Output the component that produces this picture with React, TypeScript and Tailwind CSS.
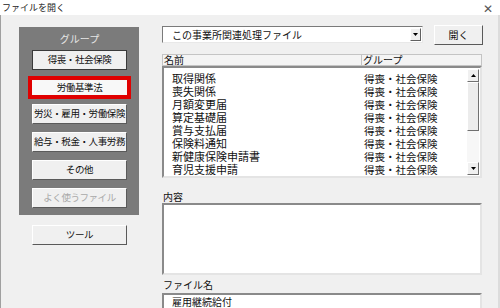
import React from "react";

const font = { fontFamily: '"Noto Sans CJK JP", "Noto Sans", sans-serif' };

function Btn({ label, disabled, focused }: { label: string; disabled?: boolean; focused?: boolean }) {
  return (
    <div
      className={
        "w-[95px] h-[20px] flex items-center justify-center bg-[#f0f0f0] text-[9.5px] leading-none whitespace-nowrap tracking-[-0.4px] border " +
        (focused
          ? "border-[#3a3a3a]"
          : "border-t-[#ffffff] border-l-[#ffffff] border-r-[#5a5a5a] border-b-[#5a5a5a]") +
        (disabled ? " text-[#a8a8a8]" : " text-[#111]")
      }
    >
      {label}
    </div>
  );
}

const rows = [
  "取得関係",
  "喪失関係",
  "月額変更届",
  "算定基礎届",
  "賞与支払届",
  "保険料通知",
  "新健康保険申請書",
  "育児支援申請",
];

export default function App() {
  return (
    <div className="w-[500px] h-[308px] bg-[#f0f0f0] overflow-hidden flex flex-col" style={font}>
      {/* title bar */}
      <div className="h-[15px] bg-white flex items-center justify-between pl-[2px] pr-[7px] shrink-0">
        <span className="text-[9px] leading-none text-[#222]">ファイルを開く</span>
        <span className="text-[12px] leading-none text-[#555]">✕</span>
      </div>
      {/* body */}
      <div className="flex-1 flex border-l border-l-[#a0a0a0] border-r-2 border-r-[#dcdcdc]">
        {/* left column */}
        <div className="ml-[18px] mt-[12px] flex flex-col">
          <div className="w-[120px] h-[188px] bg-[#7b7b7b] flex flex-col pl-[9px]">
            <div className="h-[23px] w-[103px] flex items-center justify-center text-[10px] text-[#e6e6e6] leading-none">
              グループ
            </div>
            <div className="ml-[4px]">
              <Btn label="得喪・社会保険" focused />
            </div>
            <div className="mt-[6px] w-[103px] h-[23px] border-[4px] border-[#e00000] bg-[#f8f8f8] flex items-center justify-center text-[9.5px] tracking-[-0.4px] whitespace-nowrap leading-none text-[#111]">
              労働基準法
            </div>
            <div className="ml-[4px] mt-[5px]">
              <Btn label="労災・雇用・労働保険" />
            </div>
            <div className="ml-[4px] mt-[8px]">
              <Btn label="給与・税金・人事労務" />
            </div>
            <div className="ml-[4px] mt-[8px]">
              <Btn label="その他" />
            </div>
            <div className="ml-[4px] mt-[8px]">
              <Btn label="よく使うファイル" disabled />
            </div>
          </div>
          <div className="ml-[13px] mt-[10px]">
            <Btn label="ツール" />
          </div>
        </div>
        {/* right column */}
        <div className="ml-[23px] w-[321px] flex flex-col">
          <div className="mt-[10px] flex items-start">
            <div className="mt-[1px] w-[261px] h-[17px] bg-white border border-t-[#7a7a7a] border-l-[#7a7a7a] border-r-[#e8e8e8] border-b-[#e8e8e8] flex items-center">
              <span className="flex-1 pl-[9px] text-[10px] leading-none text-[#111] whitespace-nowrap">この事業所関連処理ファイル</span>
              <div className="w-[11px] h-[13px] mr-[1px] bg-[#f0f0f0] border border-t-white border-l-white border-r-[#606060] border-b-[#606060] flex items-center justify-center">
                <svg width="5" height="3" viewBox="0 0 5 3">
                  <path d="M0 0 H5 L2.5 3 Z" fill="#000" />
                </svg>
              </div>
            </div>
            <div className="ml-[11px] w-[49px] h-[20px] bg-[#f0f0f0] border border-t-white border-l-white border-r-[#5a5a5a] border-b-[#5a5a5a] flex items-center justify-center text-[10px] leading-none text-[#111]">
              開く
            </div>
          </div>
          {/* header */}
          <div className="mt-[9px] w-[320px] h-[12px] bg-[#f4f4f4] border border-[#c4c4c4] flex text-[10px] leading-none text-[#111]">
            <div className="w-[199px] border-r border-r-[#c4c4c4] flex items-center pl-[1px]">名前</div>
            <div className="flex-1 flex items-center pl-[1px]">グループ</div>
          </div>
          {/* list */}
          <div className="w-[320px] h-[112px] bg-white border-2 border-t-[#8a8a8a] border-l-[#8a8a8a] border-r-[#e4e4e4] border-b-[#e4e4e4] flex">
            <div className="flex-1 pt-[4px] flex flex-col">
              {rows.map((r) => (
                <div key={r} className="h-[13px] flex items-center text-[#111]">
                  <span className="w-[200px] pl-[8px] text-[11px] leading-[13px] whitespace-nowrap">{r}</span>
                  <span className="text-[10.5px] leading-[13px] whitespace-nowrap">得喪・社会保険</span>
                </div>
              ))}
            </div>
            <div className="w-[12px] mr-[1px] mt-[1px] mb-[1px] flex flex-col bg-[#f7f7f7]">
              <div className="h-[13px] bg-[#f0f0f0] border border-t-white border-l-white border-r-[#707070] border-b-[#707070] flex items-center justify-center">
                <svg width="5" height="3" viewBox="0 0 5 3">
                  <path d="M0 3 H5 L2.5 0 Z" fill="#000" />
                </svg>
              </div>
              <div className="h-[49px] bg-[#ececec] border border-t-white border-l-white border-r-[#707070] border-b-[#707070]" />
              <div className="flex-1" />
              <div className="h-[13px] bg-[#f0f0f0] border border-t-white border-l-white border-r-[#707070] border-b-[#707070] flex items-center justify-center">
                <svg width="5" height="3" viewBox="0 0 5 3">
                  <path d="M0 0 H5 L2.5 3 Z" fill="#000" />
                </svg>
              </div>
            </div>
          </div>
          <div className="mt-[12px] h-[13px] flex items-center pl-[1px] text-[10px] leading-none text-[#111]">内容</div>
          <div className="w-[320px] h-[72px] bg-white border-2 border-t-[#8a8a8a] border-l-[#8a8a8a] border-r-[#e4e4e4] border-b-[#e4e4e4]" />
          <div className="mt-[3px] h-[13px] flex items-center pl-[1px] text-[10px] leading-none text-[#111]">ファイル名</div>
          <div className="mt-[2px] w-[320px] h-[16px] bg-white border-2 border-b-0 border-t-[#8a8a8a] border-l-[#8a8a8a] border-r-[#e4e4e4] flex items-center pl-[8px] text-[10px] leading-none text-[#111]">
            雇用継続給付
          </div>
        </div>
      </div>
    </div>
  );
}
